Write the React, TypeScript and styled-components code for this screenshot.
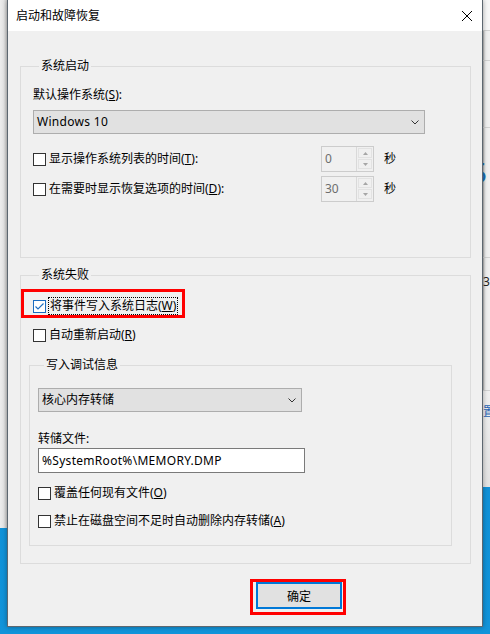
import React from "react";
import styled, { createGlobalStyle, css } from "styled-components";

const Global = createGlobalStyle`
  html, body { margin: 0; padding: 0; }
  body {
    background: #0f8cd6;
    font-family: "Noto Sans", "Noto Sans CJK SC", sans-serif;
    font-size: 12px;
    color: #000;
    overflow: hidden;
  }
`;

const Desktop = styled.div`
  display: flex;
  align-items: flex-start;
  width: 490px;
  height: 634px;
  overflow: hidden;
  background: linear-gradient(#0c86d0, #1194da);
`;

const LeftBehind = styled.div`
  flex: 0 0 7px;
  height: 528px;
  background: linear-gradient(90deg, #ececec 0%, #e6e6e6 55%, #cdcdcd 100%);
`;

const RightBehind = styled.div`
  flex: 0 0 7px;
  height: 487px;
  background: #f0f0f0;
  display: flex;
  flex-direction: column;
  overflow: hidden;
  box-shadow: inset 2px 0 2px -1px rgba(0, 0, 0, 0.3);
`;

const BehindCell = styled.div<{ $h: number; $bg?: string; $line?: boolean }>`
  flex: 0 0 ${(p) => p.$h}px;
  box-sizing: border-box;
  background: ${(p) => p.$bg ?? "transparent"};
  border-bottom: ${(p) => (p.$line ? "1px solid #d2d2d2" : "none")};
  overflow: hidden;
  white-space: nowrap;
`;

const BehindText = styled.span<{ $size: number; $color: string; $mt: number; $ml: number }>`
  display: block;
  font-size: ${(p) => p.$size}px;
  line-height: 1;
  color: ${(p) => p.$color};
  margin-top: ${(p) => p.$mt}px;
  margin-left: ${(p) => p.$ml}px;
`;

const Dialog = styled.div`
  flex: 0 0 476px;
  height: 627px;
  box-sizing: border-box;
  border: 1px solid #5d6770;
  border-top: none;
  background: #f0f0f0;
  display: flex;
  flex-direction: column;
  box-shadow: 0 0 5px rgba(0, 0, 0, 0.35);
  position: relative;
  z-index: 1;
`;

const TitleBar = styled.div`
  flex: none;
  height: 31px;
  background: #fff;
  display: flex;
  align-items: center;
  justify-content: space-between;
  padding: 0 10px 0 8px;
`;

const Title = styled.span`
  font-size: 12px;
  line-height: 31px;
`;

const Body = styled.div`
  flex: 1;
  display: flex;
  flex-direction: column;
  padding: 0 11px 0 12px;
`;

const Group = styled.fieldset<{ $pad: string; $m: string }>`
  display: block;
  margin: ${(p) => p.$m};
  padding: ${(p) => p.$pad};
  border: 1px solid #dcdcdc;
  min-inline-size: 0;
`;

const Legend = styled.legend`
  padding: 0 2px;
  margin-left: 6px;
  font-size: 12px;
  line-height: 16px;
`;

const FieldLabel = styled.div<{ $mt: number }>`
  line-height: 16px;
  margin-top: ${(p) => p.$mt}px;
`;

const Combo = styled.div<{ $w: number; $mt: number }>`
  width: ${(p) => p.$w}px;
  height: 24px;
  box-sizing: border-box;
  margin-top: ${(p) => p.$mt}px;
  border: 1px solid #adadad;
  background: #e1e1e1;
  display: flex;
  align-items: center;
  justify-content: space-between;
  padding: 0 5px 0 3px;
  line-height: 22px;
`;

const Latin = styled.span`
  letter-spacing: 0.3px;
`;

const CheckRow = styled.div<{ $mt: number; $h: number; $highlight?: boolean }>`
  display: flex;
  align-items: center;
  box-sizing: border-box;
  height: ${(p) => p.$h}px;
  margin-top: ${(p) => p.$mt}px;
  ${(p) =>
    p.$highlight &&
    css`
      width: fit-content;
      outline: 3px solid #ff0000;
      margin-left: -9px;
      padding: 5px 4px 0 9px;
    `}
`;

const Box = styled.span<{ $checked?: boolean }>`
  flex: none;
  width: 13px;
  height: 13px;
  box-sizing: border-box;
  border: 1px solid ${(p) => (p.$checked ? "#1a6cc0" : "#333333")};
  background: #fff;
  display: flex;
`;

const CheckText = styled.span<{ $focus?: boolean; $w?: number }>`
  line-height: 16px;
  white-space: nowrap;
  margin-left: 3px;
  ${(p) => p.$w !== undefined && css`flex: 0 0 ${p.$w}px;`}
  ${(p) =>
    p.$focus &&
    css`
      margin-left: 2px;
      padding: 0 1px;
      border: 1px dotted #000;
    `}
`;

const Spin = styled.div`
  flex: none;
  display: flex;
  width: 53px;
  height: 26px;
  box-sizing: border-box;
  border: 1px solid #cccccc;
  background: #f0f0f0;
`;

const SpinValue = styled.span`
  flex: 1;
  padding-left: 3px;
  line-height: 24px;
  color: #6d6d6d;
`;

const SpinArrows = styled.div`
  flex: 0 0 17px;
  box-sizing: border-box;
  display: flex;
  flex-direction: column;
  border-left: 1px solid #d9d9d9;
  padding: 1px 1px 2px 1px;
  gap: 1px;
`;

const SpinBtn = styled.div`
  flex: 1;
  display: flex;
  align-items: center;
  justify-content: center;
  border: 1px solid #e2e2e2;
`;

const Unit = styled.span`
  margin-left: 10px;
  line-height: 16px;
`;

const TextBox = styled.input`
  display: block;
  width: 267px;
  height: 25px;
  box-sizing: border-box;
  margin: 1px 0 0;
  border: 1px solid #7a7a7a;
  background: #fff;
  padding: 0 0 0 3px;
  font: inherit;
  font-size: 12px;
  letter-spacing: 0.3px;
  color: #000;
  outline: none;
`;

const Footer = styled.div`
  display: flex;
  padding-left: 230px;
  margin-top: 15px;
`;

const Mark = styled.div`
  border: 3px solid #ff0000;
  padding: 0 1px 3px 3px;
  display: flex;
`;

const OkButton = styled.button`
  width: 86px;
  height: 27px;
  box-sizing: border-box;
  border: 2px solid #0078d7;
  background: #e1e1e1;
  font: inherit;
  font-size: 12px;
  color: #000;
  padding: 0;
`;

const Chevron = () => (
  <svg width="8" height="5" viewBox="0 0 8 5">
    <path d="M0.5 0.5 L4 4 L7.5 0.5" fill="none" stroke="#333" strokeWidth="1" />
  </svg>
);

const Close = () => (
  <svg width="10" height="10" viewBox="0 0 10 10">
    <path d="M0 0 L10 10 M10 0 L0 10" stroke="#000" strokeWidth="1" />
  </svg>
);

const Tri = ({ up }: { up?: boolean }) => (
  <svg width="5" height="3" viewBox="0 0 5 3">
    <path d={up ? "M0 3 L2.5 0 L5 3 Z" : "M0 0 L2.5 3 L5 0 Z"} fill="#a6a6a6" />
  </svg>
);

const Check = ({ checked }: { checked?: boolean }) => (
  <Box $checked={checked}>
    {checked && (
      <svg width="11" height="11" viewBox="0 0 11 11">
        <path d="M1.5 5.5 L4 8 L9.5 2.5" fill="none" stroke="#1a6cc0" strokeWidth="1.1" />
      </svg>
    )}
  </Box>
);

const Spinner = ({ value }: { value: string }) => (
  <Spin>
    <SpinValue>{value}</SpinValue>
    <SpinArrows>
      <SpinBtn>
        <Tri up />
      </SpinBtn>
      <SpinBtn>
        <Tri />
      </SpinBtn>
    </SpinArrows>
  </Spin>
);

export default function App() {
  return (
    <>
      <Global />
      <Desktop>
        <LeftBehind />
        <Dialog>
          <TitleBar>
            <Title>启动和故障恢复</Title>
            <Close />
          </TitleBar>
          <Body>
            <Group $m="27px 0 0" $pad="13px 12px 55px 12px">
              <Legend>系统启动</Legend>
              <FieldLabel $mt={0}>
                默认操作系统(<u>S</u>):
              </FieldLabel>
              <Combo $w={392} $mt={7}>
                <Latin>Windows 10</Latin>
                <Chevron />
              </Combo>
              <CheckRow $mt={12} $h={26}>
                <Check />
                <CheckText $w={272}>
                  显示操作系统列表的时间(<u>T</u>):
                </CheckText>
                <Spinner value="0" />
                <Unit>秒</Unit>
              </CheckRow>
              <CheckRow $mt={4} $h={26}>
                <Check />
                <CheckText $w={272}>
                  在需要时显示恢复选项的时间(<u>D</u>):
                </CheckText>
                <Spinner value="30" />
                <Unit>秒</Unit>
              </CheckRow>
            </Group>

            <Group $m="9px 0 0" $pad="9px 12px 17px 12px">
              <Legend>系统失败</Legend>
              <CheckRow $mt={0} $h={23} $highlight>
                <Check checked />
                <CheckText $focus>
                  将事件写入系统日志(<u>W</u>)
                </CheckText>
              </CheckRow>
              <CheckRow $mt={11} $h={18}>
                <Check />
                <CheckText>
                  自动重新启动(<u>R</u>)
                </CheckText>
              </CheckRow>

              <Group $m="13px 6px 0 -4px" $pad="15px 8px 15px 8px">
                <Legend>写入调试信息</Legend>
                <Combo $w={264} $mt={0}>
                  <span>核心内存转储</span>
                  <Chevron />
                </Combo>
                <FieldLabel $mt={19}>转储文件:</FieldLabel>
                <TextBox readOnly value="%SystemRoot%\MEMORY.DMP" />
                <CheckRow $mt={11} $h={18}>
                  <Check />
                  <CheckText>
                    覆盖任何现有文件(<u>O</u>)
                  </CheckText>
                </CheckRow>
                <CheckRow $mt={10} $h={18}>
                  <Check />
                  <CheckText>
                    禁止在磁盘空间不足时自动删除内存转储(<u>A</u>)
                  </CheckText>
                </CheckRow>
              </Group>
            </Group>

            <Footer>
              <Mark>
                <OkButton>确定</OkButton>
              </Mark>
            </Footer>
          </Body>
        </Dialog>
        <RightBehind>
          <BehindCell $h={31} $bg="#f7f7f7" $line />
          <BehindCell $h={30} $line />
          <BehindCell $h={67} $line />
          <BehindCell $h={130} $line>
            <BehindText $size={28} $color="#1a6db5" $mt={30} $ml={-12}>
              5
            </BehindText>
          </BehindCell>
          <BehindCell $h={133} $line>
            <BehindText $size={12} $color="#222" $mt={18} $ml={0}>
              3
            </BehindText>
          </BehindCell>
          <BehindCell $h={96} $bg="linear-gradient(#f0f0f0, #e2e2e2)">
            <BehindText $size={12} $color="#1e64b4" $mt={15} $ml={0}>
              置
            </BehindText>
          </BehindCell>
        </RightBehind>
      </Desktop>
    </>
  );
}
